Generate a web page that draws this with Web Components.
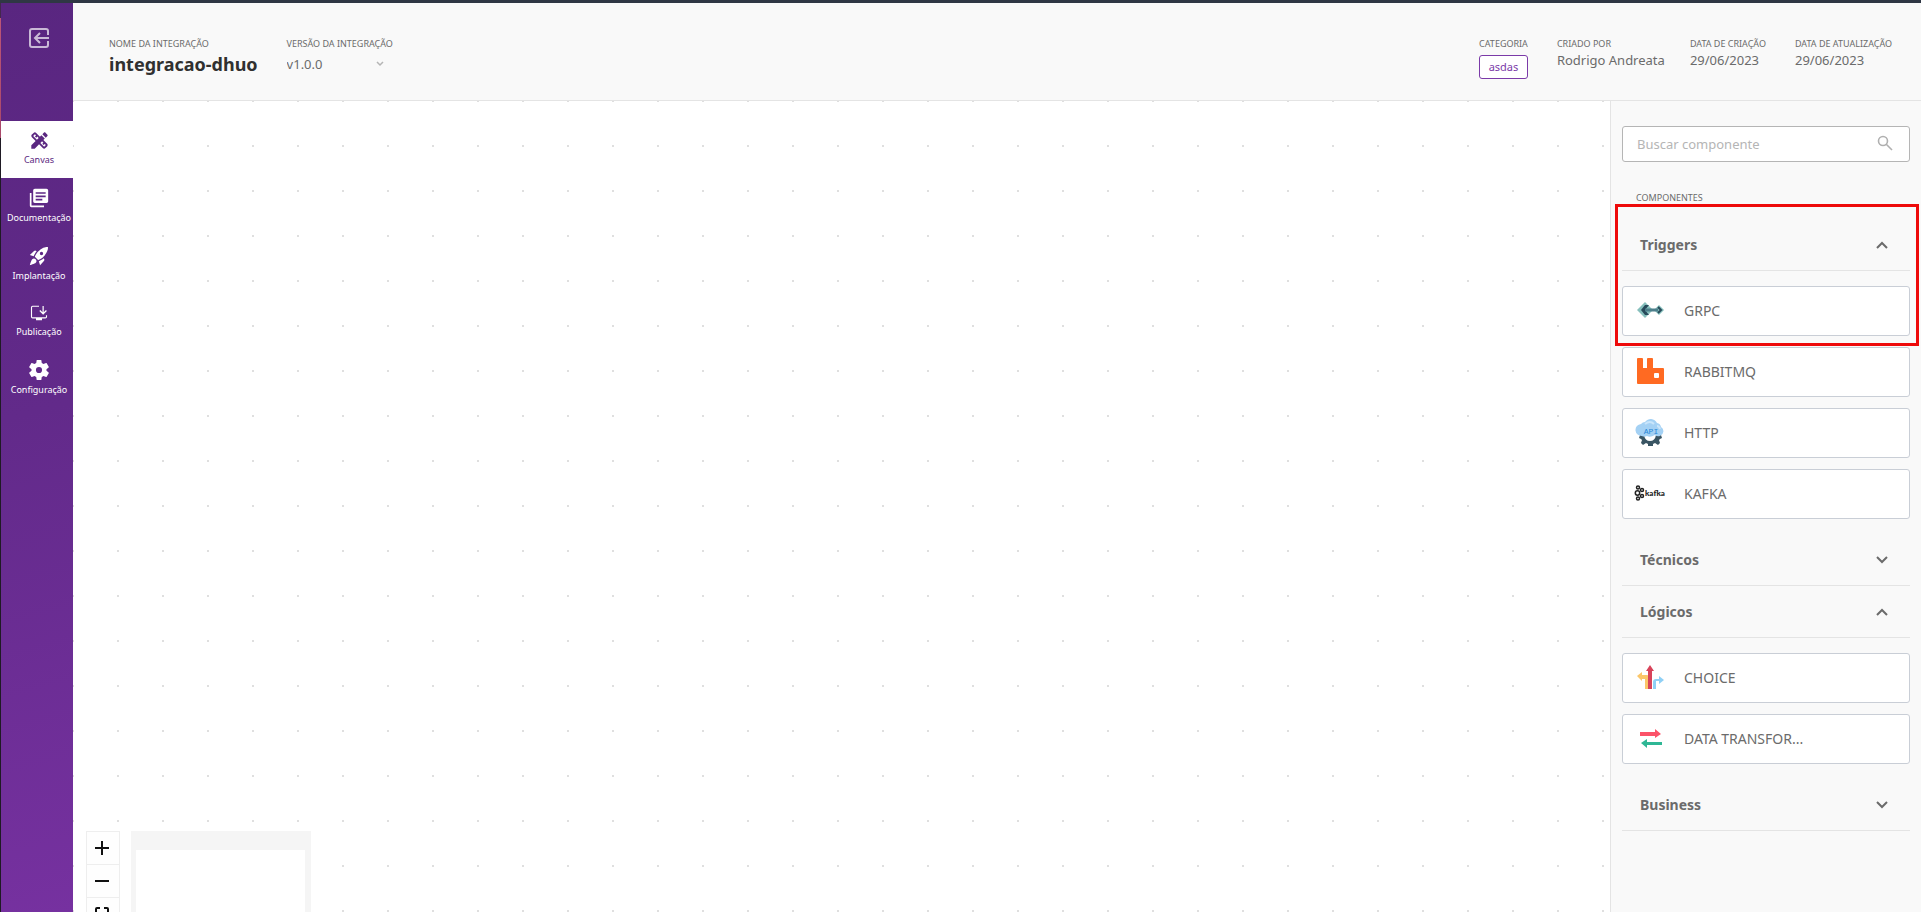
<!DOCTYPE html>
<html lang="pt-BR">
<head>
<meta charset="utf-8">
<title>integracao-dhuo</title>
<style>
  body {
    margin: 0;
    font-family: "Noto Sans", "Open Sans", sans-serif;
    font-size: 13px;
    color: #6b6b6b;
  }
</style>
</head>
<body>
<app-shell>
  <side-bar slot="side">
    <nav-item icon="canvas" size="19" active>Canvas</nav-item>
    <nav-item icon="docs" size="20">Documentação</nav-item>
    <nav-item icon="rocket" size="20">Implantação</nav-item>
    <nav-item icon="publish" size="18">Publicação</nav-item>
    <nav-item icon="settings" size="20">Configuração</nav-item>
  </side-bar>
  <integration-header slot="header">
    <info-field label="Nome da integração"><strong>integracao-dhuo</strong></info-field>
    <version-select></version-select>
    <info-field slot="meta" label="Categoria"><category-tag>asdas</category-tag></info-field>
    <info-field slot="meta" label="Criado por">Rodrigo Andreata</info-field>
    <info-field slot="meta" label="Data de criação">29/06/2023</info-field>
    <info-field slot="meta" label="Data de atualização">29/06/2023</info-field>
  </integration-header>
  <flow-canvas></flow-canvas>
  <component-panel slot="panel">
    <component-group label="Triggers" open highlight>
      <component-card icon="grpc">GRPC</component-card>
      <component-card icon="rabbit">RABBITMQ</component-card>
      <component-card icon="http">HTTP</component-card>
      <component-card icon="kafka">KAFKA</component-card>
    </component-group>
    <component-group label="Técnicos"></component-group>
    <component-group label="Lógicos" open>
      <component-card icon="choice">CHOICE</component-card>
      <component-card icon="transfer">DATA TRANSFOR...</component-card>
    </component-group>
    <component-group label="Business"></component-group>
  </component-panel>
</app-shell>

<script>
const navIcons = {
  canvas: `<path transform="translate(-1.800 -1.800) scale(1.150)" d="M16.24 11.51l1.57-1.57-3.75-3.75-1.57 1.57-4.14-4.13c-.78-.78-2.05-.78-2.83 0l-1.9 1.9c-.78.78-.78 2.05 0 2.83l4.13 4.13L3 17.25V21h3.75l4.76-4.76 4.13 4.13c.95.95 2.23.6 2.83 0l1.9-1.9c.78-.78.78-2.05 0-2.83l-4.13-4.13zm-7.06-.44L5.04 6.94l1.89-1.9L8.2 6.31 7.02 7.5l1.41 1.41 1.19-1.19 1.45 1.45-1.89 1.9zm7.88 7.89l-4.13-4.13 1.9-1.9 1.45 1.45-1.19 1.19 1.41 1.41 1.19-1.19 1.27 1.27-1.9 1.9zM20.71 7.04c.39-.39.39-1.02 0-1.41l-2.34-2.34c-.47-.47-1.12-.29-1.41 0l-1.83 1.83 3.75 3.75 1.83-1.83z"/>`,
  docs: `<path d="M3 6H1v15c0 1.100 .9 2 2 2h15v-2H3V6zm18-5H7c-1.100 0-2 .9-2 2v13c0 1.100 .9 2 2 2h14c1.100 0 2-.9 2-2V3c0-1.100-.9-2-2-2zM20 11H8V9h12v2zm-4 4H8v-2h8v2zm4-8H8V5h12v2z"/>`,
  rocket: `<path d="M9.190 6.350C7.150 8.640 5.750 11.930 5.620 12.240L1 10.700l5.050-4.600c.470-.470 1.150-.680 1.810-.550l1.330.8zM11.170 17s3.740-1.550 5.890-3.700C23 7.300 22.900 2.600 22.700 1.300c-1.300-.3-6.100-.3-12 5.640C8.550 9.090 7 12.830 7 12.830L11.170 17zm6.480-2.190c-2.290 2.040-5.580 3.440-5.890 3.570L13.310 23l4.550-5.050c.470-.470.680-1.150.550-1.810l-.76-1.330zM9 18c0 .830-.340 1.580-.880 2.120C6.940 21.300 1 23 1 23s1.700-5.940 2.880-7.120A3 3 0 0 1 9 18zm4-9a2 2 0 1 1 4 0 2 2 0 0 1-4 0z"/>`,
  publish: `<path d="M12 3H3.500A1.500 1.500 0 0 0 2 4.500V17a1.500 1.500 0 0 0 1.500 1.500h17A1.500 1.500 0 0 0 22 17v-2" fill="none" stroke="currentColor" stroke-width="1.500"/><path d="M8 18.500h8v3H8zM17.500 14.200l-5-5 1.200-1.200 3 3V2.500h1.600V11l3-3 1.200 1.200z"/>`,
  settings: `<path d="M19.430 12.980c.040-.320.070-.640.070-.980s-.030-.660-.070-.980l2.610-2.040c.240-.190.300-.530.150-.8l-2.470-4.280c-.150-.270-.480-.370-.760-.270l-3.070 1.230c-.640-.490-1.330-.900-2.090-1.210L13.330.390A.75.75 0 0 0 12.590-.2H8.410a.75.75 0 0 0-.740.590L7.200 3.650c-.760.310-1.450.730-2.090 1.210L2.040 3.630c-.280-.110-.610 0-.760.270L-1.190 8.180c-.160.270-.090.610.150.8l2.610 2.040c-.040.320-.070.650-.070.980s.030.660.070.980l-2.610 2.040c-.240.190-.300.530-.150.8l2.470 4.280c.150.270.480.370.760.270l3.070-1.230c.640.490 1.330.900 2.090 1.210l.470 3.260c.070.340.370.590.740.590h4.180c.370 0 .670-.250.740-.590l.470-3.260c.760-.310 1.450-.730 2.090-1.210l3.070 1.230c.280.110.610 0 .760-.270l2.470-4.280c.150-.270.090-.610-.150-.8zM10.500 15.700a3.700 3.700 0 1 1 0-7.400 3.700 3.700 0 0 1 0 7.400z" transform="translate(1.500 0)"/>`
};

const componentIcons = {
  grpc: `
    <path d="M3 16l8-8 8 8-8 8z" fill="#86bfbc"/>
    <path d="M20 16l5-5 5 5-5 5z" fill="#86bfbc"/>
    <path d="M11 11h4l-4 5 4 5h-4l-4-5z" fill="#274a5a"/>
    <path d="M11 16h13" stroke="#4d7f8b" stroke-width="3"/>
    <path d="M24 13l3 3-3 3" fill="none" stroke="#274a5a" stroke-width="2"/>`,
  rabbit: `
    <path fill="#ff6a22" fill-rule="evenodd" d="M4 3h4q1 0 1 1v9h4V4q0-1 1-1h4q1 0 1 1v9h10q1 0 1 1v14q0 1-1 1H4q-1 0-1-1V4q0-1 1-1zM20 19v3q0 1 1 1h3q1 0 1-1v-3q0-1-1-1h-3q-1 0-1 1z"/>`,
  http: `
    <path d="M6 19l-1 3 2 1 1 1-1 3 2 2 3-2 2 1v2h5v-2l2-1 3 2 2-2-1-3 1-1 2-1-1-3h-5q-1 6-6 6t-6-6z" fill="#3a5563"/>
    <path d="M8 20a6 6 0 0 1-1-12 6 6 0 0 1 4-2 7 7 0 0 1 12 1 5 5 0 0 1 4 4 5 5 0 0 1-1 9q-3 1-5-1-5 3-8 1-3 1-5 0z" fill="#a4d1f4"/>
    <path d="M11 8q5-4 9 0M23 10q2 0 3 3" fill="none" stroke="#c9e5fb" stroke-width="2"/>
    <text x="17" y="18" text-anchor="middle" font-family="Liberation Mono, monospace" font-size="8" fill="#2888d8">API</text>`,
  kafka: `
    <g fill="none" stroke="#222" stroke-width="1.500">
      <circle cx="4" cy="10.500" r="1.500"/><circle cx="3.500" cy="16" r="2.200"/><circle cx="4" cy="21.500" r="1.500"/>
      <circle cx="8" cy="13" r="1.500"/><circle cx="8" cy="19" r="1.500"/>
    </g>
    <text x="11" y="19" font-family="Lato, sans-serif" font-weight="900" font-size="8" fill="#222">kafka</text>`,
  choice: `
    <path d="M11 28V18H8v2l-5-5 5-4v3h5q2 0 2 2v12z" fill="#fbc66a"/>
    <path d="M19 28v-7q0-3 3-3h3v-3l5 4-5 4v-3h-3v8z" fill="#8fd0f5"/>
    <path d="M14 28V10h-2l4-6 4 6h-2v18z" fill="#d8435a"/>`,
  transfer: `
    <path d="M6 10h15V7l6 5-6 4v-2H6z" fill="#fb5369"/>
    <path d="M28 20H13v-3l-6 4 6 5v-3h15z" fill="#2fb795"/>`
};

function render(host, html) {
  host.attachShadow({ mode: "open" }).innerHTML = html;
}

class AppShell extends HTMLElement {
  connectedCallback() {
    // The padding on the left leaves a thin strip of the desktop visible
    render(this, `
      <style>
        :host {
          display: grid;
          grid-template: auto minmax(0, 1fr) / auto minmax(0, 1fr) auto;
          box-sizing: border-box;
          height: 100vh;
          overflow: hidden;
          border-top: 3px solid #2f3744;
          padding-left: 1px;
          background: linear-gradient(#43284d 15px, #bd5577 15px, #a8486a 135px, #1f1a24 135px);
        }
        ::slotted([slot=side]) { grid-row: 1 / 3; }
        ::slotted([slot=header]) { grid-column: 2 / 4; }
      </style>
      <slot name="side"></slot>
      <slot name="header"></slot>
      <slot></slot>
      <slot name="panel"></slot>
    `);
  }
}

class SideBar extends HTMLElement {
  connectedCallback() {
    render(this, `
      <style>
        :host {
          display: flex;
          flex-direction: column;
          width: 72px;
          background: linear-gradient(165deg, #592680, #622a8a 45%, #7631a0);
        }
        button {
          height: 48px;
          margin: 0 0 70px;
          padding: 0 0 0 3px;
          border: 0;
          background: none;
          color: #c9b9d6;
          cursor: pointer;
        }
        svg { display: block; margin: 22px auto 0; }
      </style>
      <button aria-label="Voltar">
        <svg width="20" height="20" viewBox="0 0 20 20" fill="none" stroke="currentColor" stroke-width="2">
          <path d="M19 7V3a2 2 0 0 0-2-2H3a2 2 0 0 0-2 2v14a2 2 0 0 0 2 2h14a2 2 0 0 0 2-2v-4M20 10H7M11 5l-5 5 5 5"/>
        </svg>
      </button>
      <slot></slot>
    `);
  }
}

class NavItem extends HTMLElement {
  connectedCallback() {
    const size = this.getAttribute("size");
    render(this, `
      <style>
        :host { display: block; color: #fff; }
        :host([active]) { background: #fff; color: #5a2780; }
        a {
          display: flex;
          flex-direction: column;
          align-items: center;
          gap: 4px;
          padding: 10px 0 12px 4px;
          color: inherit;
          text-decoration: none;
          font-size: 9px;
          line-height: 12px;
          white-space: nowrap;
        }
      </style>
      <a href="#${this.getAttribute("icon")}">
        <svg width="${size}" height="${size}" viewBox="0 0 24 24" fill="currentColor">${navIcons[this.getAttribute("icon")]}</svg>
        <slot></slot>
      </a>
    `);
  }
}

class IntegrationHeader extends HTMLElement {
  connectedCallback() {
    render(this, `
      <style>
        :host {
          display: flex;
          justify-content: space-between;
          box-sizing: border-box;
          height: 98px;
          padding: 35px 29px 0 36px;
          background: #f9f9f9;
          border-bottom: 1px solid #e4e4e4;
        }
        div { display: flex; gap: 29px; }
        .meta {
          display: grid;
          grid-template-columns: auto 104px auto auto;
        }
      </style>
      <div><slot></slot></div>
      <div class="meta"><slot name="meta"></slot></div>
    `);
  }
}

class InfoField extends HTMLElement {
  connectedCallback() {
    render(this, `
      <style>
        :host { display: block; white-space: nowrap; line-height: 20px; }
        span {
          display: block;
          font-size: 9px;
          line-height: 12px;
          text-transform: uppercase;
        }
        ::slotted(strong) { font-size: 18px; line-height: 28px; color: #303030; }
      </style>
      <span>${this.getAttribute("label")}</span>
      <slot></slot>
    `);
  }
}

class CategoryTag extends HTMLElement {
  connectedCallback() {
    render(this, `
      <style>
        :host {
          display: block;
          margin-top: 5px;
          border: 1px solid #7b3aa8;
          border-radius: 3px;
          background: #fff;
          color: #7b3aa8;
          font-size: 11px;
          line-height: 22px;
          text-align: center;
        }
      </style>
      <slot></slot>
    `);
  }
}

class VersionSelect extends HTMLElement {
  connectedCallback() {
    render(this, `
      <style>
        :host { display: block; }
        label {
          display: block;
          font-size: 9px;
          line-height: 12px;
          text-transform: uppercase;
        }
        div { display: grid; align-items: center; }
        select, svg { grid-area: 1 / 1; }
        select {
          appearance: none;
          height: 28px;
          border: 0;
          padding: 0;
          background: none;
          color: inherit;
          font: inherit;
        }
        svg { justify-self: end; margin-right: 8px; pointer-events: none; }
      </style>
      <label for="version">Versão da integração</label>
      <div>
        <select id="version"><option>v1.0.0</option></select>
        <svg width="10" height="6" viewBox="0 0 10 6" fill="none" stroke="#b5b5b5" stroke-width="1.500"><path d="M2 1l3 3 3-3"/></svg>
      </div>
    `);
  }
}

class FlowCanvas extends HTMLElement {
  connectedCallback() {
    // Controls and minimap float over the dotted grid, partly below the fold
    render(this, `
      <style>
        :host {
          display: block;
          position: relative;
          overflow: hidden;
          background: #fff radial-gradient(circle at 1px 1px, #dfdfdf 1px, transparent 1px) -1px -1px / 45px 45px;
        }
        .tools {
          position: absolute;
          left: 13px;
          bottom: -54px;
          display: flex;
          gap: 11px;
        }
        .controls { width: 34px; }
        button {
          display: grid;
          place-items: center;
          box-sizing: border-box;
          width: 100%;
          height: 33px;
          padding: 0 2px 0 0;
          border: 1px solid #eee;
          border-bottom: 0;
          background: #fefefe;
          color: #111;
        }
        .minimap {
          box-sizing: border-box;
          width: 180px;
          height: 135px;
          padding: 19px 6px 19px 5px;
          background: #f5f5f5;
        }
        .view { height: 100%; background: #fff; }
      </style>
      <div class="tools">
        <div class="controls">
          <button aria-label="Aproximar"><svg width="14" height="14" fill="none" stroke="currentColor" stroke-width="2"><path d="M0 7h14M7 0v14"/></svg></button>
          <button aria-label="Afastar"><svg width="14" height="14" fill="none" stroke="currentColor" stroke-width="2"><path d="M0 7h14"/></svg></button>
          <button aria-label="Ajustar"><svg width="14" height="14" fill="none" stroke="currentColor" stroke-width="2"><path d="M1 5V2q0-1 1-1h3M9 1h3q1 0 1 1v3M13 9v3q0 1-1 1H9M5 13H2q-1 0-1-1V9"/></svg></button>
        </div>
        <div class="minimap"><div class="view"></div></div>
      </div>
    `);
  }
}

class ComponentPanel extends HTMLElement {
  connectedCallback() {
    render(this, `
      <style>
        :host {
          display: block;
          box-sizing: border-box;
          width: 311px;
          padding: 25px 11px 0;
          background: #f9f9f9;
          border-left: 1px solid #e4e4e4;
        }
        .search {
          display: flex;
          align-items: center;
          box-sizing: border-box;
          height: 36px;
          padding: 0 16px 0 14px;
          border: 1px solid #b5b5b5;
          border-radius: 3px;
          background: #fff;
        }
        input {
          flex: 1;
          min-width: 0;
          padding: 0;
          border: 0;
          outline: 0;
          background: none;
          font: inherit;
        }
        input::placeholder { color: #b5b5b5; }
        h2 {
          margin: 29px 0 15px 14px;
          font-size: 9px;
          font-weight: 400;
          line-height: 13px;
          text-transform: uppercase;
        }
      </style>
      <div class="search">
        <input type="search" aria-label="Buscar componente" placeholder="Buscar componente">
        <svg width="16" height="18" viewBox="0 0 16 18" fill="none" stroke="#b0b0b0" stroke-width="1.600"><circle cx="6" cy="6" r="4.500"/><path d="M9 9l6 6"/></svg>
      </div>
      <h2>Componentes</h2>
      <slot></slot>
    `);
  }
}

class ComponentGroup extends HTMLElement {
  connectedCallback() {
    render(this, `
      <style>
        :host { display: block; position: relative; }
        button {
          display: flex;
          align-items: center;
          justify-content: space-between;
          box-sizing: border-box;
          width: 100%;
          height: 52px;
          padding: 0 22px 0 18px;
          border: 0;
          border-bottom: 1px solid #e4e4e4;
          background: none;
          color: inherit;
          font: bold 14px "Noto Sans", sans-serif;
          cursor: pointer;
        }
        .items { display: none; flex-direction: column; gap: 11px; padding: 15px 0; }
        :host([open]) .items { display: flex; }
        :host([open]) svg { transform: rotate(180deg); }
        :host([highlight])::after {
          content: "";
          position: absolute;
          top: -15px;
          left: -7px;
          right: -9px;
          height: 136px;
          border: 3px solid #ee0a0a;
          pointer-events: none;
        }
      </style>
      <button>
        ${this.getAttribute("label")}
        <svg width="12" height="8" viewBox="0 0 12 8" fill="none" stroke="currentColor" stroke-width="2"><path d="M1 1l5 5 5-5"/></svg>
      </button>
      <div class="items"><slot></slot></div>
    `);

    const button = this.shadowRoot.querySelector("button");
    button.setAttribute("aria-expanded", this.hasAttribute("open"));
    button.addEventListener("click", () => {
      this.toggleAttribute("open");
      button.setAttribute("aria-expanded", this.hasAttribute("open"));
    });
  }
}

class ComponentCard extends HTMLElement {
  connectedCallback() {
    render(this, `
      <style>
        :host { display: block; }
        button {
          display: flex;
          align-items: center;
          gap: 18px;
          box-sizing: border-box;
          width: 100%;
          height: 50px;
          padding: 0 11px 2px;
          border: 1px solid #c9ced6;
          border-radius: 3px;
          background: #fff;
          color: inherit;
          font: inherit;
          font-size: 14px;
          cursor: grab;
        }
      </style>
      <button draggable="true">
        <svg width="32" height="32" viewBox="0 0 32 32">${componentIcons[this.getAttribute("icon")]}</svg>
        <slot></slot>
      </button>
    `);
  }
}

customElements.define("app-shell", AppShell);
customElements.define("side-bar", SideBar);
customElements.define("nav-item", NavItem);
customElements.define("integration-header", IntegrationHeader);
customElements.define("info-field", InfoField);
customElements.define("category-tag", CategoryTag);
customElements.define("version-select", VersionSelect);
customElements.define("flow-canvas", FlowCanvas);
customElements.define("component-panel", ComponentPanel);
customElements.define("component-group", ComponentGroup);
customElements.define("component-card", ComponentCard);
</script>
</body>
</html>
